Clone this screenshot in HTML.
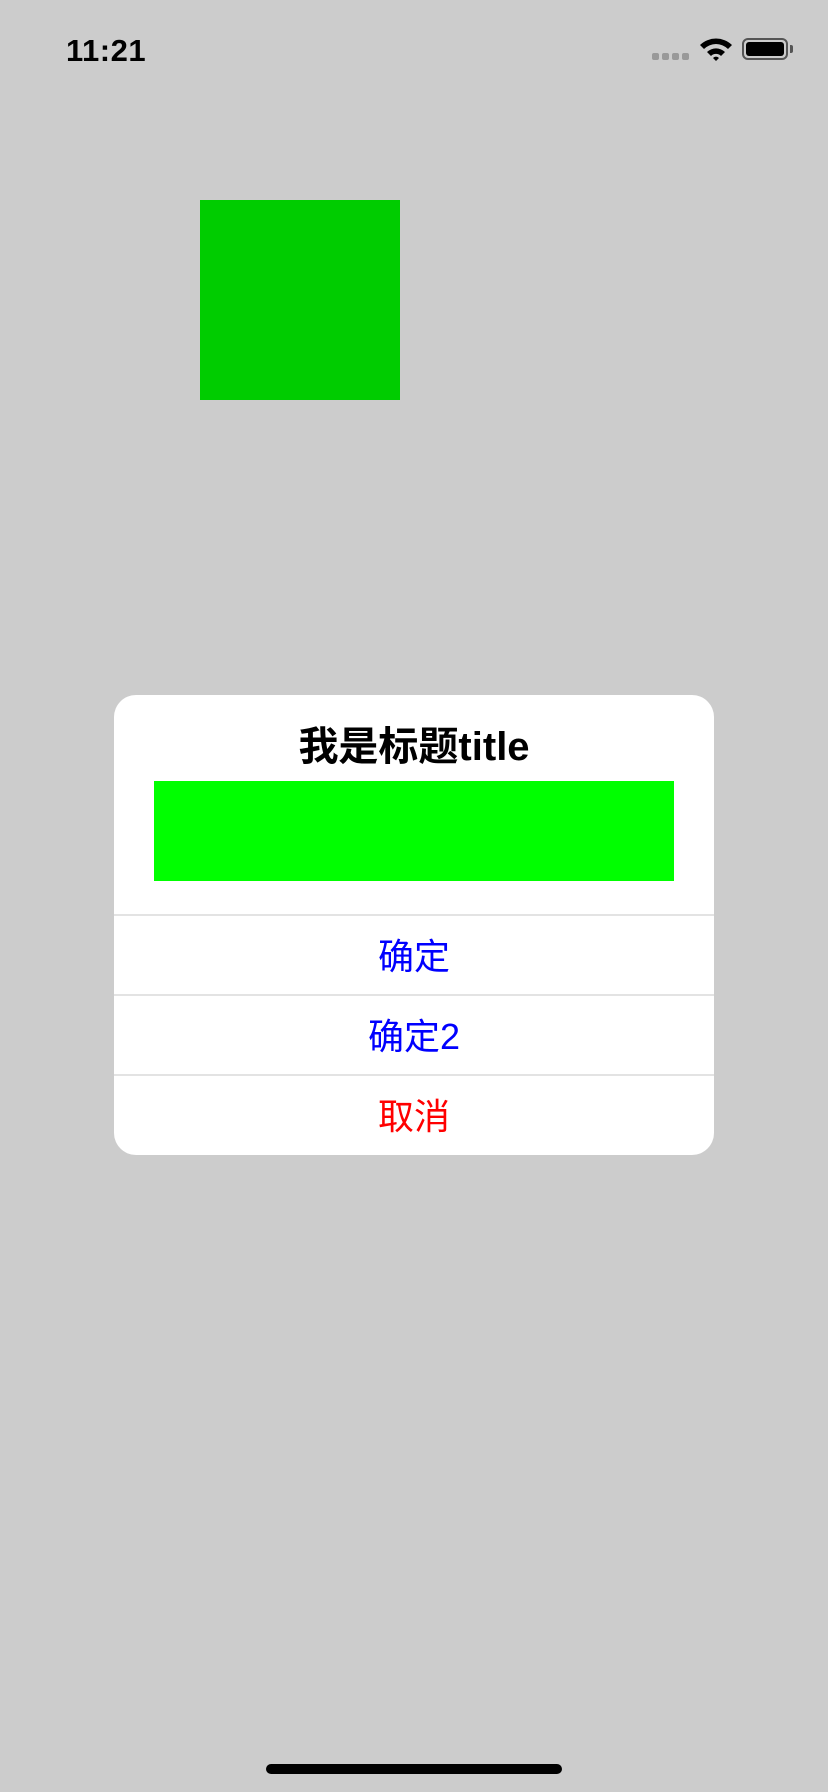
<!DOCTYPE html>
<html><head><meta charset="utf-8"><style>
*{margin:0;padding:0;box-sizing:border-box}
body{width:828px;height:1792px;background:#cccccc;position:relative;overflow:hidden;font-family:"Liberation Sans","Noto Sans CJK SC",sans-serif}
.abs{position:absolute}
.time{left:66px;top:33px;font-size:31px;font-weight:bold;color:#000;letter-spacing:0.5px}
.sq{left:200px;top:200px;width:200px;height:200px;background:#00cc00}
.dlg{left:114px;top:695px;width:600px;height:460px;background:#fff;border-radius:22px;overflow:hidden}
.title{position:absolute;left:0;right:0;top:27px;text-align:center;font-size:40px;font-weight:bold;color:#000;line-height:50px}
.bar{position:absolute;left:40px;top:86px;width:520px;height:100px;background:#00ff00}
.btn{position:absolute;left:0;width:600px;height:80px;border-top:2px solid #e3e3e3;text-align:center;font-size:36px;line-height:82px}
.home{left:266px;top:1764px;width:296px;height:10px;border-radius:5px;background:#000}
</style></head><body>
<div class="abs time">11:21</div>
<div class="abs" style="left:652px;top:53px">
<span style="position:absolute;left:0;top:0;width:7px;height:7px;border-radius:2px;background:#999"></span>
<span style="position:absolute;left:10px;top:0;width:7px;height:7px;border-radius:2px;background:#999"></span>
<span style="position:absolute;left:20px;top:0;width:7px;height:7px;border-radius:2px;background:#999"></span>
<span style="position:absolute;left:30px;top:0;width:7px;height:7px;border-radius:2px;background:#999"></span>
</div>
<svg class="abs" style="left:698px;top:36px" width="36" height="26" viewBox="0 0 36 26">
<path d="M2 9 A23 23 0 0 1 34 9 L30 13 A17 17 0 0 0 6 13 Z" fill="#000"/>
<path d="M9 16 A13 13 0 0 1 27 16 L23 20 A7 7 0 0 0 13 20 Z" fill="#000"/>
<path d="M15 22 A4 4 0 0 1 21 22 L18 25 Z" fill="#000"/>
</svg>
<div class="abs" style="left:742px;top:38px;width:46px;height:22px;border:2px solid #555;border-radius:6px;padding:2px"><div style="width:100%;height:100%;background:#000;border-radius:3px"></div></div>
<div class="abs" style="left:790px;top:45px;width:3px;height:8px;background:#555;border-radius:0 2px 2px 0"></div>
<div class="abs sq"></div>
<div class="abs dlg">
<div class="title">我是标题title</div>
<div class="bar"></div>
<div class="btn" style="top:219px;color:#0000ff">确定</div>
<div class="btn" style="top:299px;color:#0000ff">确定2</div>
<div class="btn" style="top:379px;color:#ff0000">取消</div>
</div>
<div class="abs home"></div>
</body></html>
